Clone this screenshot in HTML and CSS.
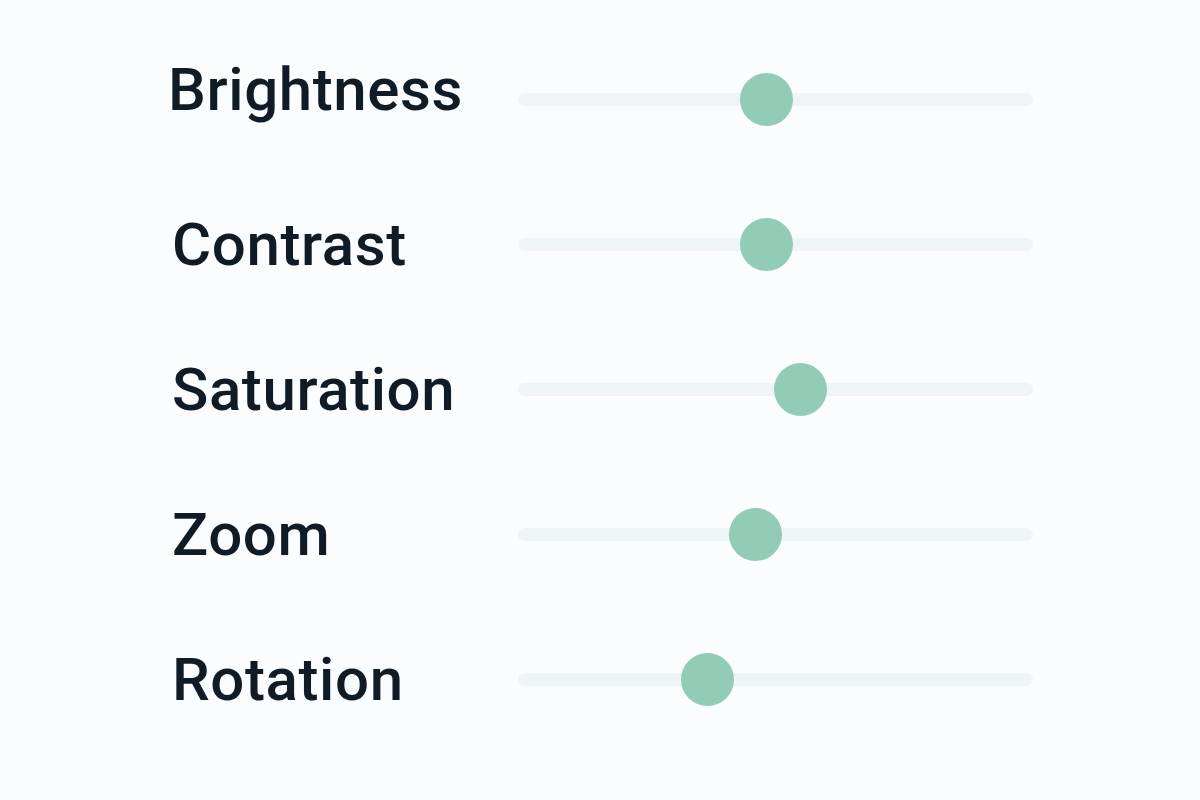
FILE: index.html
```html
<!DOCTYPE html>
<html>
<head>
<meta charset="utf-8">
<link rel="stylesheet" href="styles.css">
</head>
<body>
<div class="panel">
  <div class="row"><div class="label label-first">Brightness</div><div class="track"><div class="thumb" style="left:48.3%"></div></div></div>
  <div class="row"><div class="label">Contrast</div><div class="track"><div class="thumb" style="left:48.3%"></div></div></div>
  <div class="row"><div class="label">Saturation</div><div class="track"><div class="thumb" style="left:54.8%"></div></div></div>
  <div class="row"><div class="label">Zoom</div><div class="track"><div class="thumb" style="left:46.2%"></div></div></div>
  <div class="row"><div class="label">Rotation</div><div class="track"><div class="thumb" style="left:36.7%"></div></div></div>
</div>
</body>
</html>
```
FILE: styles.css
```css
html, body {
  margin: 0;
  padding: 0;
  background: #fbfcfd;
}
body {
  width: 1200px;
  height: 800px;
  overflow: hidden;
  font-family: Roboto, "Noto Sans", sans-serif;
}
.panel {
  display: flex;
  flex-direction: column;
  padding: 27px 0 0 172px;
}
.row {
  display: flex;
  align-items: center;
  height: 145px;
}
.label {
  width: 346px;
  font-size: 60px;
  font-weight: 500;
  color: #0f1c27;
  letter-spacing: 0.6px;
  white-space: nowrap;
}
.label-first {
  margin-left: -4px;
  width: 350px;
  margin-bottom: 20px;
}
.track {
  position: relative;
  width: 515px;
  height: 13px;
  border-radius: 7px;
  background: #eff4f7;
}
.thumb {
  position: absolute;
  top: 50%;
  width: 53px;
  height: 53px;
  margin-left: -26.5px;
  margin-top: -26.5px;
  border-radius: 50%;
  background: #92cbb6;
}
```
